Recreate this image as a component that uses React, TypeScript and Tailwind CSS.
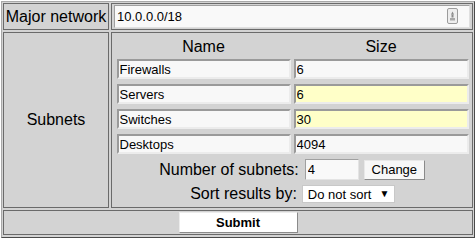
import React from "react";

const cell = "border border-[#6a6a6a] bg-[#d3d3d3]";
const inputCls =
  "block box-border h-[20px] border-2 border-t-[#9a9a9a] border-l-[#9a9a9a] border-b-[#ececec] border-r-[#ececec] px-[1px] text-[13px] leading-none outline-none font-['Liberation_Sans',Arial,sans-serif] text-black";

function Field({ value, yellow, w }: { value: string; yellow?: boolean; w: string }) {
  return (
    <input
      readOnly
      value={value}
      className={`${inputCls} ${w} ${yellow ? "bg-[#ffffc8]" : "bg-[#f8f8f8]"}`}
    />
  );
}

export default function App() {
  const rows = [
    { name: "Firewalls", size: "6", yellow: false },
    { name: "Servers", size: "6", yellow: true },
    { name: "Switches", size: "30", yellow: true },
    { name: "Desktops", size: "4094", yellow: false },
  ];
  return (
    <div className="w-[475px] h-[240px] bg-white pt-[1px] pl-[1px] font-['Liberation_Sans',Arial,sans-serif] text-black">
      <div className="box-border w-[474px] h-[237px] border border-t-[#a8a8a8] border-l-[#a8a8a8] border-b-[#4a4a4a] border-r-[#4a4a4a] bg-[#d3d3d3] pt-[1px] pl-[1px] pr-[1px] pb-[2px] grid grid-cols-[106px_362px] grid-rows-[27px_176px_25px] gap-[2px]">
        {/* Row 1 */}
        <div className={`${cell} flex items-center justify-center text-[16px] leading-none`}>
          Major network
        </div>
        <div className={`${cell} flex items-center pl-[2px]`}>
          <div className="relative">
            <input
              readOnly
              value="10.0.0.0/18"
              className="block box-border w-[356px] h-[23px] bg-[#f9f9f9] border border-t-[#a0a0a0] border-l-[#a0a0a0] border-b-[#e0e0e0] border-r-[#e0e0e0] pl-[2px] text-[13px] outline-none font-['Liberation_Sans',Arial,sans-serif] text-black"
            />
            <svg
              className="absolute left-[333px] top-[3px]"
              width="11"
              height="16"
              viewBox="0 0 11 16"
            >
              <rect x="0.5" y="0.5" width="10" height="15" rx="1.5" fill="#eeeeee" stroke="#9c9c9c" />
              <path d="M5.5 3.5 L7 6.5 L4 6.5 Z" fill="#8a8a8a" />
              <rect x="4.5" y="6.5" width="2" height="3" fill="#8a8a8a" />
              <rect x="3" y="10" width="5" height="2.5" fill="#a8a8a8" />
            </svg>
          </div>
        </div>

        {/* Row 2 */}
        <div className={`${cell} flex items-center justify-center text-[16px] leading-none`}>
          Subnets
        </div>
        <div className={`${cell} flex flex-col items-center`}>
          <div className="grid grid-cols-[174px_175px] gap-x-[3px] ml-[1px]">
            <div className="h-[26px] flex items-center justify-center text-[16px] leading-none pt-[1px]">
              Name
            </div>
            <div className="h-[26px] flex items-center justify-center text-[16px] leading-none pt-[1px]">
              Size
            </div>
            {rows.map((r, i) => (
              <React.Fragment key={r.name}>
                <div className={i > 0 ? "mt-[5px]" : ""}>
                  <Field value={r.name} w="w-[174px]" />
                </div>
                <div className={i > 0 ? "mt-[5px]" : ""}>
                  <Field value={r.size} yellow={r.yellow} w="w-[175px]" />
                </div>
              </React.Fragment>
            ))}
          </div>
          <div className="mt-[5px] flex items-center h-[21px]">
            <span className="text-[16px] leading-none mr-[6px]">Number of subnets:</span>
            <input
              readOnly
              value="4"
              className="block box-border w-[54px] h-[21px] bg-[#f9f9f9] border border-t-[#a0a0a0] border-l-[#a0a0a0] border-b-[#e4e4e4] border-r-[#e4e4e4] pl-[2px] text-[13px] outline-none font-['Liberation_Sans',Arial,sans-serif] text-black"
            />
            <button className="ml-[5px] box-border w-[61px] h-[20px] bg-[#f7f7f7] border border-t-[#e8e8e8] border-l-[#e8e8e8] border-b-[#8a8a8a] border-r-[#8a8a8a] text-[13px] leading-none font-['Liberation_Sans',Arial,sans-serif] text-black">
              Change
            </button>
          </div>
          <div className="mt-[5px] flex items-center h-[18px] ml-[1px]">
            <span className="text-[16px] leading-none mr-[5px]">Sort results by:</span>
            <div className="box-border w-[93px] h-[18px] bg-white border border-[#c8c8c8] flex items-center pl-[5px] text-[13px] leading-none">
              <span>Do not sort</span>
              <span className="ml-[8px] text-[10px]">▼</span>
            </div>
          </div>
        </div>

        {/* Row 3 */}
        <div className={`${cell} col-span-2 flex items-center justify-center`}>
          <button className="box-border w-[119px] h-[21px] bg-white border border-t-[#ececec] border-l-[#ececec] border-b-[#8a8a8a] border-r-[#8a8a8a] text-[13px] font-bold leading-none font-['Liberation_Sans',Arial,sans-serif] text-black">
            Submit
          </button>
        </div>
      </div>
    </div>
  );
}
